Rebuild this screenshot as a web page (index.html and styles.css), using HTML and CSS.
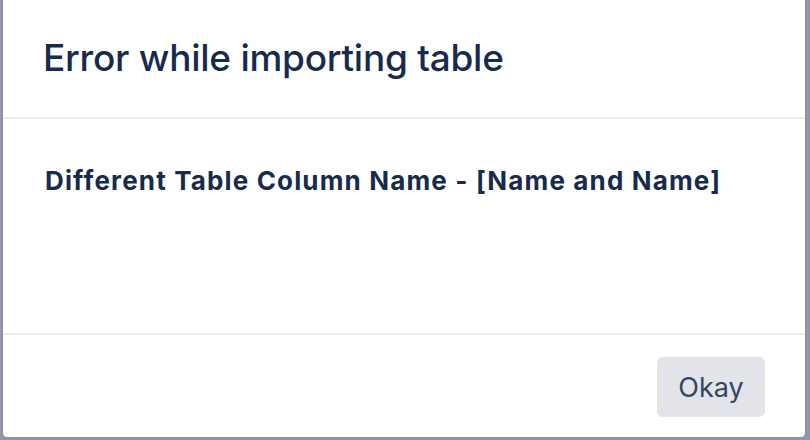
FILE: index.html
```html
<!DOCTYPE html>
<html lang="en">
<head>
  <meta charset="UTF-8">
  <title>Error while importing table</title>
  <link rel="stylesheet" href="styles.css">
</head>
<body>

  <div class="backdrop">
    <div class="modal">
      <div class="modalHeader">
        <h2 class="modalTitle">Error while importing table</h2>
      </div>
      <div class="modalBody">
        <p class="erro">Different Table Column Name - [Name and Name]</p>
      </div>
      <div class="modalFooter">
        <button class="botaoOkay">Okay</button>
      </div>
    </div>
  </div>

</body>
</html>
```

FILE: styles.css
```css
body {
  margin: 0;
  font-family: Inter, "Noto Sans", sans-serif;
  background: #9298a9;
  color: #172b4d;
}
.backdrop {
  height: 440px;
  padding: 0 5px 3px 3px;
  box-sizing: border-box;
  display: flex;
}
.modal {
  flex: 1;
  display: flex;
  flex-direction: column;
  background: #fff;
  border-radius: 0 0 4px 4px;
  box-shadow: 0 0 2px rgba(9, 30, 66, 0.25);
}
.modalHeader {
  height: 117px;
  padding: 0 40px;
  display: flex;
  align-items: flex-end;
  border-bottom: 2px solid #ebecf0;
}
.modalTitle {
  margin: 0 0 37px;
  font-size: 37px;
  line-height: 44px;
  font-weight: 500;
  letter-spacing: -0.25px;
}
.modalBody {
  flex: 1;
  padding: 0 42px;
  border-bottom: 2px solid #ebecf0;
}
.erro {
  margin: 47px 0 0;
  font-size: 26px;
  line-height: 30px;
  font-weight: 700;
  letter-spacing: 1.15px;
}
.modalFooter {
  display: flex;
  justify-content: flex-end;
  padding: 22px 40px 20px;
}
.botaoOkay {
  width: 108px;
  height: 60px;
  border: none;
  border-radius: 6px;
  background: #e2e4e9;
  color: #344563;
  font-family: Inter, "Noto Sans", sans-serif;
  font-size: 27px;
  cursor: pointer;
}
```
